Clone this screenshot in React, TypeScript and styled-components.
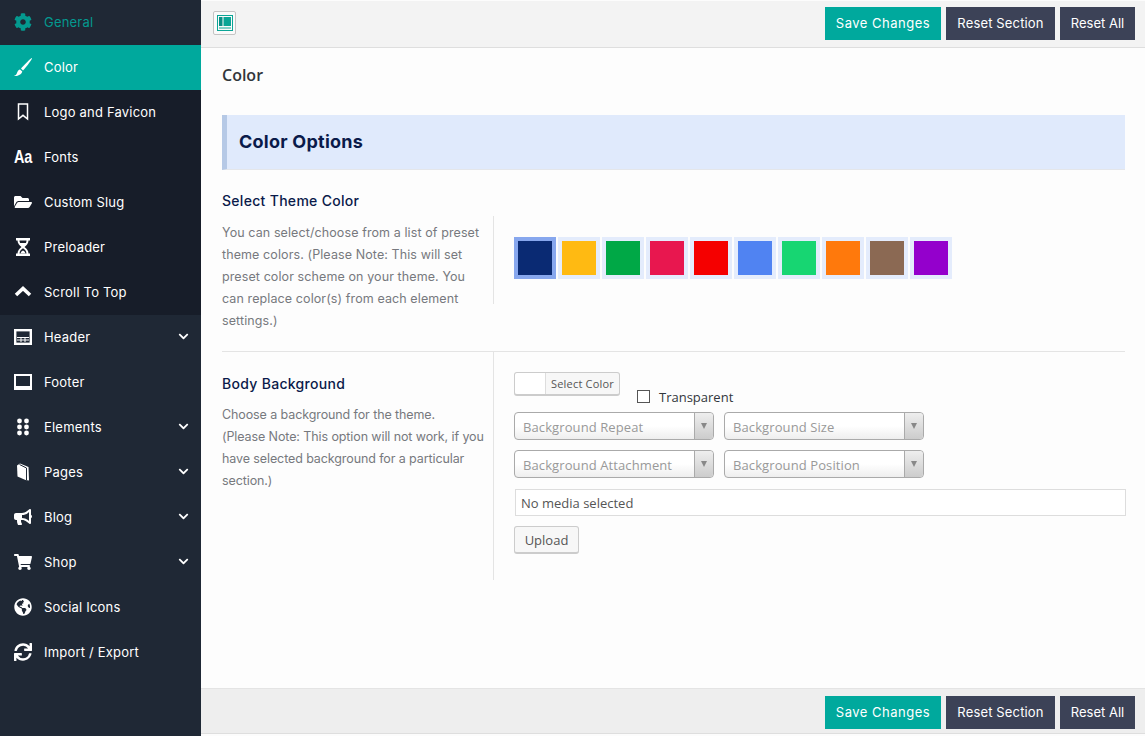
import React from 'react';
import styled, { createGlobalStyle } from 'styled-components';
import {
  FaCog,
  FaFolderOpen,
  FaChevronDown,
  FaBullhorn,
  FaShoppingCart,
  FaGlobeAmericas,
  FaSync,
} from 'react-icons/fa';

const GlobalStyle = createGlobalStyle`
  html, body { margin: 0; padding: 0; background: #fcfcfc; }
  body { font-family: "Open Sans", "Liberation Sans", sans-serif; overflow: hidden; }
  * { box-sizing: border-box; }
`;

const Page = styled.div`
  display: flex;
  width: 1145px;
  height: 736px;
  overflow: hidden;
`;

const Sidebar = styled.nav`
  width: 201px;
  flex: none;
  background: #1f2835;
`;

const SubMenu = styled.div`
  background: #171d29;
`;

const MenuItem = styled.div<{ $active?: boolean; $current?: boolean }>`
  display: flex;
  align-items: center;
  height: 45px;
  padding: 0 12px 2px 14px;
  font-family: Inter, "Noto Sans", sans-serif;
  font-size: 13px;
  letter-spacing: 0.2px;
  color: ${(p) => (p.$current ? '#04998f' : '#fff')};
  background: ${(p) => (p.$active ? '#00a99d' : 'transparent')};
`;

const IconSlot = styled.span`
  width: 18px;
  height: 18px;
  margin-right: 12px;
  flex: none;
  display: flex;
  align-items: center;
  justify-content: center;
  font-size: 18px;
`;

const AaGlyph = styled.span`
  display: inline-block;
  font-family: "Liberation Sans", sans-serif;
  font-weight: 700;
  font-size: 19px;
  letter-spacing: 0;
  transform: scaleX(0.76);
`;

const Label = styled.span`
  flex: 1;
`;

const Main = styled.main`
  flex: 1;
  min-width: 0;
  display: flex;
  flex-direction: column;
`;

const Bar = styled.div<{ $bottom?: boolean }>`
  height: ${(p) => (p.$bottom ? '46px' : '47px')};
  margin-top: ${(p) => (p.$bottom ? '0' : '1px')};
  margin-bottom: ${(p) => (p.$bottom ? '2px' : '0')};
  display: flex;
  align-items: center;
  gap: 5px;
  padding: ${(p) => (p.$bottom ? '2px 10px 0 12px' : '0 10px 2px 12px')};
  background: ${(p) => (p.$bottom ? '#eeeeee' : '#f3f3f3')};
  border-top: ${(p) => (p.$bottom ? '1px solid #e4e4e4' : 'none')};
  border-bottom: 1px solid #dedede;
`;

const ToggleBox = styled.div`
  width: 23px;
  height: 24px;
  margin-right: auto;
  border: 1px solid #c4c4c4;
  border-radius: 2px;
  background: #fafafa;
  display: flex;
  align-items: center;
  justify-content: center;
`;

const ActionButton = styled.button<{ $primary?: boolean; $w: number; $spacing: number }>`
  width: ${(p) => p.$w}px;
  height: 33px;
  padding: 0;
  border: none;
  font-family: Inter, "Noto Sans", sans-serif;
  font-size: 13px;
  letter-spacing: ${(p) => p.$spacing}px;
  color: #fff;
  background: ${(p) => (p.$primary ? '#00a99d' : '#3c4257')};
`;

const Content = styled.div`
  flex: 1;
  padding: 0 20px 0 21px;
  background: #fdfdfd;
`;

const Title = styled.h2`
  margin: 0;
  height: 67px;
  padding-top: 15px;
  font-size: 16px;
  line-height: 24px;
  font-weight: 600;
  color: #32363b;
`;

const SectionHead = styled.div`
  height: 55px;
  padding: 0 0 2px 12px;
  display: flex;
  align-items: center;
  background: #e0eafc;
  border-left: 5px solid #b6c9e6;
  border-bottom: 1px solid #e4e6ea;
  font-family: Inter, "Noto Sans", sans-serif;
  font-size: 18px;
  font-weight: 700;
  letter-spacing: 0.25px;
  color: #0a1a4a;
`;

const Row = styled.div<{ $first?: boolean }>`
  display: grid;
  grid-template-columns: 271px 1fr;
  border-bottom: ${(p) => (p.$first ? '1px solid #e4e4e4' : 'none')};
  padding-top: ${(p) => (p.$first ? '21px' : '0')};
`;

const RowInfo = styled.div<{ $first?: boolean }>`
  padding: ${(p) => (p.$first ? '0 6px 0 0' : '22px 6px 0 0')};
`;

const RowTitle = styled.div<{ $first?: boolean }>`
  font-family: Inter, "Noto Sans", sans-serif;
  font-size: 14px;
  font-weight: 500;
  line-height: 20px;
  letter-spacing: 0.3px;
  color: #0a1a4a;
  margin-bottom: ${(p) => (p.$first ? '11px' : '10px')};
`;

const RowDesc = styled.p<{ $tight?: boolean }>`
  margin: 0;
  font-family: Inter, "Noto Sans", sans-serif;
  font-size: 12.5px;
  letter-spacing: ${(p) => (p.$tight ? '-0.1px' : '0.1px')};
  line-height: 22px;
  color: #77797e;
`;

const RowBody = styled.div<{ $first?: boolean }>`
  border-left: 1px solid #e4e4e4;
  padding-left: 20px;
  height: ${(p) => (p.$first ? '88px' : '228px')};
  margin-top: ${(p) => (p.$first ? '25px' : '0')};
  margin-bottom: ${(p) => (p.$first ? '47px' : '0')};
  padding-top: ${(p) => (p.$first ? '21px' : '20px')};
`;

const Swatches = styled.div`
  display: flex;
  gap: 2px;
`;

const Swatch = styled.div<{ $c: string; $selected?: boolean }>`
  width: 42px;
  height: 42px;
  border: 4px solid ${(p) => (p.$selected ? '#87a7ee' : '#e4ecfc')};
  background: ${(p) => p.$c};
`;

const PickerRow = styled.div`
  display: flex;
  height: 40px;
`;

const Picker = styled.div`
  width: 106px;
  height: 24px;
  display: flex;
  border: 1px solid #ccc;
  border-bottom-width: 2px;
  border-radius: 3px;
  background: #f7f7f7;
  font-size: 11px;
  color: #555;
`;

const PickerChip = styled.span`
  width: 31px;
  background: #fff;
  border-right: 1px solid #ddd;
  border-radius: 3px 0 0 3px;
`;

const PickerText = styled.span`
  flex: 1;
  text-align: center;
  line-height: 22px;
  letter-spacing: 0.2px;
`;

const CheckWrap = styled.label`
  display: flex;
  align-items: center;
  height: 15px;
  margin: 17px 0 0 17px;
  font-size: 13px;
  color: #32373c;
`;

const CheckBox = styled.span`
  width: 13px;
  height: 13px;
  margin-right: 9px;
  border: 1px solid #555;
  background: #fff;
`;

const SelectGrid = styled.div`
  display: grid;
  grid-template-columns: 200px 200px;
  gap: 10px;
`;

const SelectBox = styled.div`
  height: 28px;
  display: flex;
  border: 1px solid #aaa;
  border-radius: 4px;
  background: linear-gradient(#fff 50%, #eeeeee);
  font-size: 13px;
  letter-spacing: 0.1px;
  color: #999;
`;

const SelectText = styled.span`
  flex: 1;
  padding-left: 8px;
  line-height: 28px;
  white-space: nowrap;
`;

const SelectArrow = styled.span`
  width: 19px;
  border-left: 1px solid #aaa;
  border-radius: 0 4px 4px 0;
  background: linear-gradient(#eeeeee, #cccccc);
  display: flex;
  align-items: center;
  justify-content: center;
  &::after {
    content: '';
    border-left: 3.5px solid transparent;
    border-right: 3.5px solid transparent;
    border-top: 6px solid #888;
  }
`;

const MediaInput = styled.div`
  width: 611px;
  height: 27px;
  margin: 11px 0 10px 1px;
  padding-left: 5px;
  border: 1px solid #ddd;
  background: #fff;
  font-size: 13px;
  line-height: 26px;
  color: #555;
`;

const UploadButton = styled.button`
  width: 65px;
  height: 28px;
  padding: 0;
  border: 1px solid #ccc;
  border-bottom-width: 2px;
  border-radius: 3px;
  background: #f7f7f7;
  font-family: "Open Sans", sans-serif;
  font-size: 13px;
  color: #555;
`;

const BrushIcon = () => (
  <svg width="18" height="18" viewBox="0 0 18 18" fill="#fff">
    <path d="M17.500 0C15 2 9.500 7.500 7 10.500L9 12.500C12 9.500 16 4 18 .5Z" />
    <path d="M6 11.500C3.500 12 3.500 14.500 2.500 16 2 17 1 17.500 0 18 3 18.200 7.500 17 8.300 13.500Z" />
  </svg>
);

const BookmarkIcon = () => (
  <svg width="12" height="18" viewBox="0 0 12 18">
    <path d="M1.500 1h9v15L6 12.300 1.500 16z" fill="none" stroke="#fff" strokeWidth="1.500" />
  </svg>
);

const HourglassIcon = () => (
  <svg width="16" height="18" viewBox="0 0 16 18" fill="#fff">
    <path
      fillRule="evenodd"
      d="M1 0h14v2.500h-1.500c0 3-2 5-4 6.500 2 1.500 4 3.500 4 6.500H15V18H1v-2.500h1.500c0-3 2-5 4-6.500-2-1.500-4-3.500-4-6.500H1zM4.500 2.500c0 1 .2 1.800.6 2.500h5.800c.4-.7.6-1.500.6-2.500zM8 10.200c-1.800 1-3.300 2.800-3.500 5.300h7c-.2-2.500-1.700-4.300-3.500-5.300z"
    />
    <path d="M5.500 15.500c.3-1.500 1.400-2.600 2.500-3 1.100.4 2.200 1.500 2.500 3z" />
  </svg>
);

const ChevronUpIcon = () => (
  <svg width="18" height="11" viewBox="0 0 18 11">
    <path d="M2 9 9 2.500 16 9" fill="none" stroke="#fff" strokeWidth="3.600" />
  </svg>
);

const BookIcon = () => (
  <svg width="14" height="18" viewBox="0 0 14 18">
    <path d="M1 2.500 4 .5 12.500 4 13 17.500 9.500 17 1.500 13.500Z" fill="#fff" />
    <path d="M3.500 1.500 10.500 5V17" fill="none" stroke="#1f2835" strokeWidth="1" />
  </svg>
);

const HeaderIcon = () => (
  <svg width="18" height="16" viewBox="0 0 18 16">
    <rect x="1.200" y="1.200" width="15.600" height="13.600" fill="none" stroke="#fff" strokeWidth="2.400" />
    <path d="M3 8h12v1H3zM3 10.500h12v1H3zM6.500 8h1v5h-1zM10.500 8h1v5h-1z" fill="#fff" />
  </svg>
);

const FooterIcon = () => (
  <svg width="18" height="16" viewBox="0 0 18 16">
    <rect x="1" y="1" width="16" height="14" fill="none" stroke="#fff" strokeWidth="2" />
    <rect x="1" y="12" width="16" height="3" fill="#fff" />
  </svg>
);

const DotsIcon = () => (
  <svg width="12" height="18" viewBox="0 0 12 18" fill="#fff">
    {[3, 9, 15].map((y) =>
      [2.500, 9.500].map((x) => <circle key={`${x}-${y}`} cx={x} cy={y} r="2.400" />)
    )}
  </svg>
);

const SidebarToggleIcon = () => (
  <svg width="16" height="16" viewBox="0 0 16 16">
    <rect x="0.500" y="0.500" width="15" height="15" fill="#fafafa" stroke="#0aa596" />
    <rect x="2" y="2" width="3.500" height="9" fill="#0a8f86" />
    <rect x="6.500" y="2" width="7.500" height="9" fill="#0aa596" />
    <rect x="2" y="12.500" width="12" height="1" fill="#0aa596" />
  </svg>
);

const topItems = [{ label: 'General', icon: <FaCog /> }];

const subItems = [
  { label: 'Color', icon: <BrushIcon />, active: true },
  { label: 'Logo and Favicon', icon: <BookmarkIcon /> },
  { label: 'Fonts', icon: <AaGlyph>Aa</AaGlyph> },
  { label: 'Custom Slug', icon: <FaFolderOpen /> },
  { label: 'Preloader', icon: <HourglassIcon /> },
  { label: 'Scroll To Top', icon: <ChevronUpIcon /> },
];

const restItems = [
  { label: 'Header', icon: <HeaderIcon />, more: true },
  { label: 'Footer', icon: <FooterIcon /> },
  { label: 'Elements', icon: <DotsIcon />, more: true },
  { label: 'Pages', icon: <BookIcon />, more: true },
  { label: 'Blog', icon: <FaBullhorn />, more: true },
  { label: 'Shop', icon: <FaShoppingCart />, more: true },
  { label: 'Social Icons', icon: <FaGlobeAmericas /> },
  { label: 'Import / Export', icon: <FaSync /> },
];

const swatches = ['#0a2a73', '#ffba12', '#00a846', '#e8174f', '#f50000', '#5083f2', '#17d672', '#ff790c', '#8b6953', '#9400cc'];

const Actions = () => (
  <>
    <ActionButton $primary $w={116} $spacing={0.5}>Save Changes</ActionButton>
    <ActionButton $w={109} $spacing={0.15}>Reset Section</ActionButton>
    <ActionButton $w={75} $spacing={0}>Reset All</ActionButton>
  </>
);

const Chevron = styled(FaChevronDown)`
  font-size: 11px;
`;

const BottomSpacer = styled.span`
  margin-right: auto;
`;

const App = () => {
  return (
    <Page>
      <GlobalStyle />
      <Sidebar>
        {topItems.map((it) => (
          <MenuItem key={it.label} $current>
            <IconSlot>{it.icon}</IconSlot>
            <Label>{it.label}</Label>
          </MenuItem>
        ))}
        <SubMenu>
          {subItems.map((it) => (
            <MenuItem key={it.label} $active={it.active}>
              <IconSlot>{it.icon}</IconSlot>
              <Label>{it.label}</Label>
            </MenuItem>
          ))}
        </SubMenu>
        {restItems.map((it) => (
          <MenuItem key={it.label}>
            <IconSlot>{it.icon}</IconSlot>
            <Label>{it.label}</Label>
            {it.more && <Chevron />}
          </MenuItem>
        ))}
      </Sidebar>
      <Main>
        <Bar>
          <ToggleBox><SidebarToggleIcon /></ToggleBox>
          <Actions />
        </Bar>
        <Content>
          <Title>Color</Title>
          <SectionHead>Color Options</SectionHead>
          <Row $first>
            <RowInfo $first>
              <RowTitle $first>Select Theme Color</RowTitle>
              <RowDesc>
                You can select/choose from a list of preset theme colors. (Please Note: This will set preset color scheme on your theme. You can replace color(s) from each element settings.)
              </RowDesc>
            </RowInfo>
            <RowBody $first>
              <Swatches>
                {swatches.map((c, i) => (
                  <Swatch key={c} $c={c} $selected={i === 0} />
                ))}
              </Swatches>
            </RowBody>
          </Row>
          <Row>
            <RowInfo>
              <RowTitle>Body Background</RowTitle>
              <RowDesc $tight>
                Choose a background for the theme.<br />(Please Note: This option will not work, if you have selected background for a particular section.)
              </RowDesc>
            </RowInfo>
            <RowBody>
              <PickerRow>
                <Picker>
                  <PickerChip />
                  <PickerText>Select Color</PickerText>
                </Picker>
                <CheckWrap>
                  <CheckBox />
                  Transparent
                </CheckWrap>
              </PickerRow>
              <SelectGrid>
                {['Background Repeat', 'Background Size', 'Background Attachment', 'Background Position'].map((s) => (
                  <SelectBox key={s}>
                    <SelectText>{s}</SelectText>
                    <SelectArrow />
                  </SelectBox>
                ))}
              </SelectGrid>
              <MediaInput>No media selected</MediaInput>
              <UploadButton>Upload</UploadButton>
            </RowBody>
          </Row>
        </Content>
        <Bar $bottom>
          <BottomSpacer />
          <Actions />
        </Bar>
      </Main>
    </Page>
  );
};

export default App;
